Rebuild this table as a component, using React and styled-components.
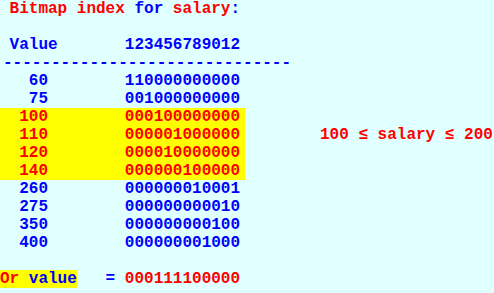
import React from "react";
import styled, { createGlobalStyle } from "styled-components";

const GlobalStyle = createGlobalStyle`
  html, body {
    margin: 0;
    padding: 0;
    background: #e0ffff;
  }
`;

const Page = styled.div`
  width: 494px;
  height: 293px;
  background: #e0ffff;
  font-family: "Liberation Mono", "Courier New", monospace;
  font-weight: bold;
  font-size: 16px;
  line-height: 18px;
  white-space: pre;
  overflow: hidden;
`;

const Line = styled.div`
  display: flex;
  height: 18px;
  color: ${(p) => p.color || "#0000ff"};
`;

const Rule = styled(Line)`
  padding-left: 3px;
`;

const Cell = styled.span`
  display: inline-block;
  width: 245px;
  background: ${(p) => (p.hit ? "#ffff00" : "transparent")};
  color: ${(p) => (p.hit ? "#ff0000" : "inherit")};
`;

const Note = styled.span`
  color: #ff0000;
  margin-left: 75px;
`;

const Red = styled.span`
  color: #ff0000;
`;

const Blue = styled.span`
  color: #0000ff;
`;

const Mark = styled.span`
  background: #ffff00;
`;

const rows = [
  ["60", "110000000000"],
  ["75", "001000000000"],
  ["100", "000100000000", true],
  ["110", "000001000000", true, true],
  ["120", "000010000000", true],
  ["140", "000000100000", true],
  ["260", "000000010001"],
  ["275", "000000000010"],
  ["350", "000000000100"],
  ["400", "000000001000"],
];

const App = () => {
  return (
    <Page>
      <GlobalStyle />
      <Line>
        <Red> Bitmap index </Red>
        <Blue>for</Blue>
        <Red> salary</Red>
        <Blue>:</Blue>
      </Line>
      <Line />
      <Line> Value       123456789012</Line>
      <Rule>{"-".repeat(30)}</Rule>
      {rows.map(([v, bits, hit, note]) => (
        <Line key={v}>
          <Cell hit={hit}>{v.padStart(5, " ") + "        " + bits}</Cell>
          {note && <Note>100 ≤ salary ≤ 200</Note>}
        </Line>
      ))}
      <Line />
      <Line>
        <Mark>
          <Red>Or</Red>
          <Blue> value</Blue>
        </Mark>
        <Blue>   = </Blue>
        <Red>000111100000</Red>
      </Line>
    </Page>
  );
};

export default App;
